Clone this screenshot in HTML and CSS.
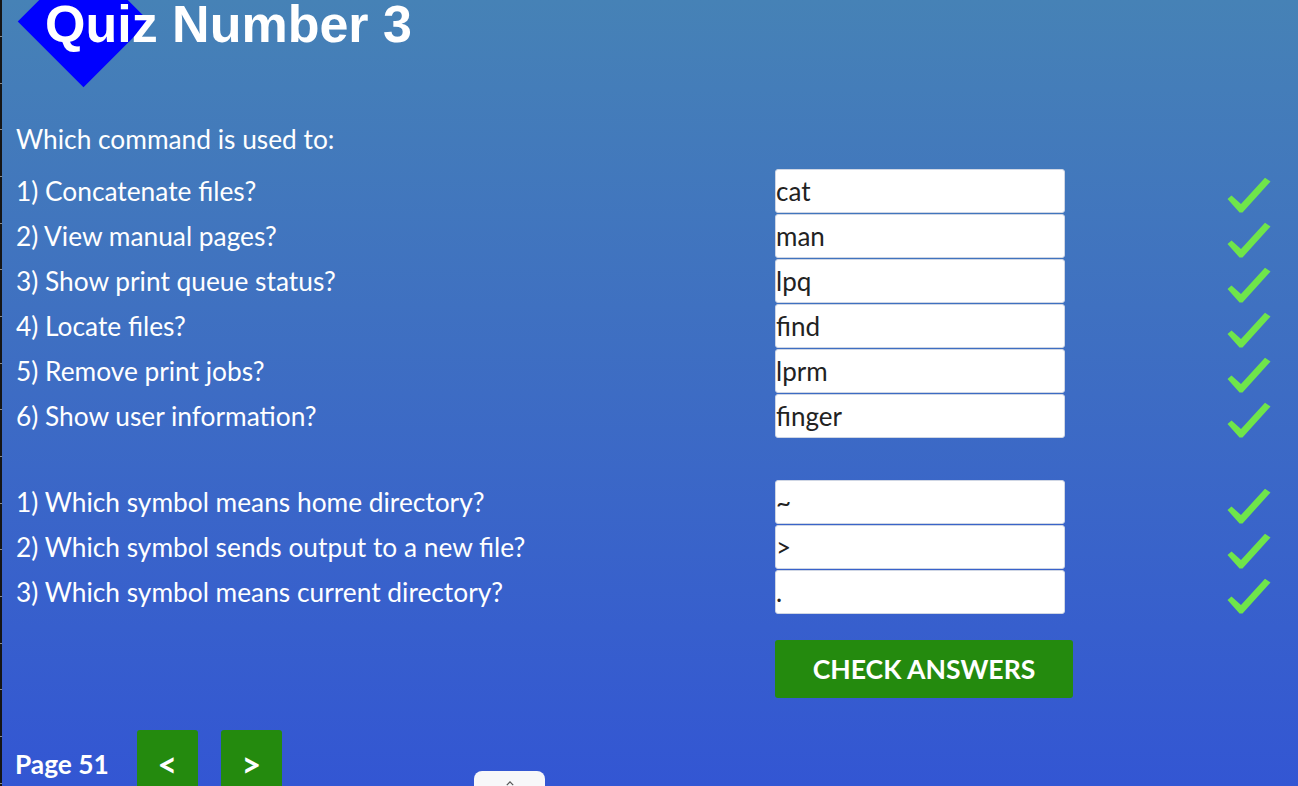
FILE: index.html
```html
<!DOCTYPE html>
<html lang="en">
<head>
<meta charset="utf-8">
<title>Quiz Number 3</title>
<link rel="stylesheet" href="styles.css">
</head>
<body>
<div class="ruler"></div>
<header class="head">
  <div class="diamond"></div>
  <h1 class="title">Quiz Number 3</h1>
</header>

<main class="quiz">
  <p class="intro">Which command is used to:</p>

  <div class="qgrid">
    <label class="q">1) Concatenate files?</label>
    <input class="ans" type="text" value="cat" readonly>
    <svg class="tick" viewBox="0 0 44 36"><path d="M0.5 22 L4.5 18.5 L14 27 L38 0.8 L43.5 4.5 L15.5 35.5 L12.5 35.5 Z"/></svg>

    <label class="q">2) View manual pages?</label>
    <input class="ans" type="text" value="man" readonly>
    <svg class="tick" viewBox="0 0 44 36"><path d="M0.5 22 L4.5 18.5 L14 27 L38 0.8 L43.5 4.5 L15.5 35.5 L12.5 35.5 Z"/></svg>

    <label class="q">3) Show print queue status?</label>
    <input class="ans" type="text" value="lpq" readonly>
    <svg class="tick" viewBox="0 0 44 36"><path d="M0.5 22 L4.5 18.5 L14 27 L38 0.8 L43.5 4.5 L15.5 35.5 L12.5 35.5 Z"/></svg>

    <label class="q">4) Locate files?</label>
    <input class="ans" type="text" value="find" readonly>
    <svg class="tick" viewBox="0 0 44 36"><path d="M0.5 22 L4.5 18.5 L14 27 L38 0.8 L43.5 4.5 L15.5 35.5 L12.5 35.5 Z"/></svg>

    <label class="q">5) Remove print jobs?</label>
    <input class="ans" type="text" value="lprm" readonly>
    <svg class="tick" viewBox="0 0 44 36"><path d="M0.5 22 L4.5 18.5 L14 27 L38 0.8 L43.5 4.5 L15.5 35.5 L12.5 35.5 Z"/></svg>

    <label class="q">6) Show user information?</label>
    <input class="ans" type="text" value="finger" readonly>
    <svg class="tick" viewBox="0 0 44 36"><path d="M0.5 22 L4.5 18.5 L14 27 L38 0.8 L43.5 4.5 L15.5 35.5 L12.5 35.5 Z"/></svg>
  </div>

  <div class="qgrid second">
    <label class="q">1) Which symbol means home directory?</label>
    <input class="ans" type="text" value="~" readonly>
    <svg class="tick" viewBox="0 0 44 36"><path d="M0.5 22 L4.5 18.5 L14 27 L38 0.8 L43.5 4.5 L15.5 35.5 L12.5 35.5 Z"/></svg>

    <label class="q">2) Which symbol sends output to a new file?</label>
    <input class="ans" type="text" value="&gt;" readonly>
    <svg class="tick" viewBox="0 0 44 36"><path d="M0.5 22 L4.5 18.5 L14 27 L38 0.8 L43.5 4.5 L15.5 35.5 L12.5 35.5 Z"/></svg>

    <label class="q">3) Which symbol means current directory?</label>
    <input class="ans" type="text" value="." readonly>
    <svg class="tick" viewBox="0 0 44 36"><path d="M0.5 22 L4.5 18.5 L14 27 L38 0.8 L43.5 4.5 L15.5 35.5 L12.5 35.5 Z"/></svg>
  </div>

  <div class="actions">
    <button class="check" type="button">CHECK ANSWERS</button>
  </div>
</main>

<footer class="pager">
  <span class="page">Page 51</span>
  <button class="nav" type="button">&lt;</button>
  <button class="nav" type="button">&gt;</button>
</footer>

<div class="popup"><svg class="caret" viewBox="0 0 10 6"><path d="M1 5 L5 1 L9 5"/></svg></div>
</body>
</html>
```

FILE: styles.css
```css
html {
  height: 100%;
  overflow: hidden;
}

body {
  margin: 0;
  height: 100%;
  position: relative;
  background: linear-gradient(to bottom, #4682b6 0%, #3d6cc4 50%, #3356d3 100%);
  font-family: Lato, "Open Sans", sans-serif;
  color: #fff;
  padding-left: 16px;
  box-sizing: border-box;
}

.ruler {
  position: absolute;
  left: 0;
  top: 0;
  width: 2px;
  height: 100%;
  background-color: #151515;
  background-image: repeating-linear-gradient(to bottom, transparent 0, transparent 36px, #8a8a8a 36px, #8a8a8a 37px, transparent 37px, transparent 46.67px);
}

.head {
  height: 52px;
}

.diamond {
  position: absolute;
  left: 37px;
  top: -25px;
  width: 93px;
  height: 93px;
  background: #0000ff;
  transform: rotate(45deg);
}

.title {
  position: relative;
  margin: 0;
  padding-left: 29px;
  font-family: "Liberation Sans", Arial, sans-serif;
  font-weight: bold;
  font-size: 52px;
  line-height: 48px;
  color: #fff;
}

.intro {
  margin: 65px 0 0;
  font-size: 26.3px;
  line-height: 45px;
  height: 45px;
}

.qgrid {
  margin-top: 7px;
  display: grid;
  grid-template-columns: 759px 290px 1fr;
  grid-auto-rows: 44px;
  row-gap: 1px;
  align-items: center;
}

.qgrid.second {
  margin-top: 42px;
}

.q {
  font-size: 26.3px;
  line-height: 44px;
  white-space: nowrap;
}

.ans {
  box-sizing: border-box;
  width: 290px;
  height: 44px;
  margin: 0;
  padding: 0;
  border: 1px solid #cfd6e4;
  border-radius: 3px;
  background: #fff;
  color: #222;
  font-family: Lato, "Open Sans", sans-serif;
  font-size: 26px;
  outline: none;
}

.tick {
  width: 44px;
  height: 36px;
  margin-left: 162px;
  margin-top: 8px;
  fill: #6fe54a;
}

.actions {
  margin-top: 26px;
  padding-left: 759px;
}

.check {
  width: 298px;
  height: 58px;
  border: none;
  border-radius: 3px;
  background: #248a0e;
  color: #fff;
  font-family: Lato, sans-serif;
  font-weight: bold;
  font-size: 26.6px;
  padding: 0;
}

.pager {
  margin-top: 32px;
  display: flex;
  align-items: flex-start;
}

.page {
  font-weight: bold;
  font-size: 26.3px;
  line-height: 68px;
  margin-left: -1px;
  margin-right: 28px;
}

.nav {
  width: 61px;
  height: 68px;
  margin-right: 23px;
  padding: 0;
  border: none;
  border-radius: 3px;
  background: #248a0e;
  color: #fff;
  font-family: Lato, sans-serif;
  font-weight: bold;
  font-size: 34px;
  line-height: 66px;
}

.popup {
  position: absolute;
  left: 474px;
  top: 771px;
  width: 71px;
  height: 30px;
  background: #f7f7f9;
  border-radius: 8px 8px 0 0;
  display: flex;
  justify-content: center;
  align-items: flex-start;
}

.caret {
  width: 8px;
  height: 5px;
  margin-top: 10px;
  fill: none;
  stroke: #555;
  stroke-width: 1.5;
}
```
